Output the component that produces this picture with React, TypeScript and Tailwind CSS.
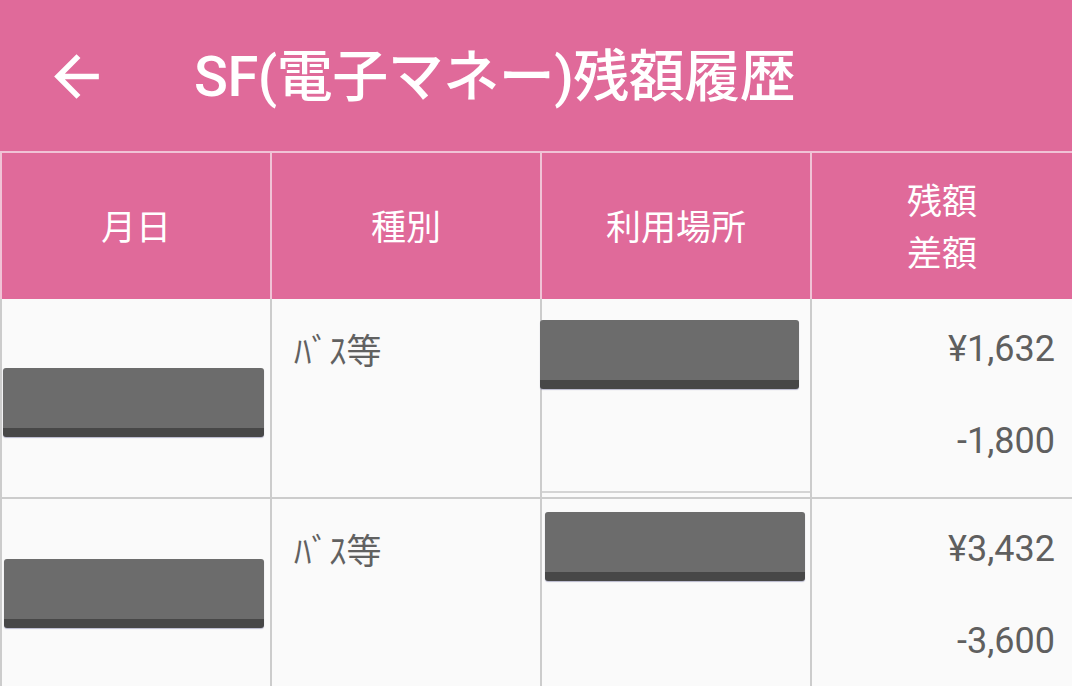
import React from 'react';

type Row = {
  kind: string;
  balance: string;
  diff: string;
  dateBlock: string;
  placeBlock: string;
};

const rows: Row[] = [
  { kind: 'ﾊﾞｽ等', balance: '¥1,632', diff: '-1,800', dateBlock: 'mt-[69px] ml-[1px] w-[261px]', placeBlock: 'mt-[21px] -ml-[2px] w-[259px]' },
  { kind: 'ﾊﾞｽ等', balance: '¥3,432', diff: '-3,600', dateBlock: 'mt-[60px] ml-[2px] w-[260px]', placeBlock: 'mt-[13px] ml-[3px] w-[260px]' },
];

const Redacted: React.FC<{ className: string }> = ({ className }) => (
  <div className={`h-[69px] rounded-[3px] bg-[#6c6c6c] border-b-[9px] border-[#474747] shadow-[0_1px_1px_rgba(60,60,120,0.35)] ${className}`} />
);

const App: React.FC = () => {
  return (
    <div
      className="w-[1072px] h-[686px] overflow-hidden bg-[#fafafa]"
      style={{ fontFamily: 'Roboto, "Noto Sans CJK JP", sans-serif' }}
    >
      {/* --- App bar --- */}
      <header className="h-[151px] bg-[#e06a9a] flex items-center pl-[43px] pt-[2px]">
        <svg width="67" height="67" viewBox="0 0 24 24" fill="white">
          <path d="M20 11H7.83l5.59-5.59L12 4l-8 8 8 8 1.41-1.41L7.83 13H20v-2z" />
        </svg>
        <h1 className="ml-[84px] text-[56px] leading-none font-medium text-white tracking-[-0.5px]">
          SF(電子マネー)残額履歴
        </h1>
      </header>

      {/* --- Table --- */}
      <div className="grid grid-cols-[270px_270px_270px_1fr]">
        {['月日', '種別', '利用場所'].map((h) => (
          <div
            key={h}
            className="h-[148px] bg-[#e06a9a] border-t-2 border-l-2 border-[#f0c3d6] flex items-center justify-center pt-[6px] text-[35px] text-white"
          >
            {h}
          </div>
        ))}
        <div className="h-[148px] bg-[#e06a9a] border-t-2 border-l-2 border-[#f0c3d6] flex flex-col items-center justify-center pt-[6px] text-[35px] leading-[52px] text-white">
          <span>残額</span>
          <span>差額</span>
        </div>

        {rows.map((r, i) => (
          <React.Fragment key={i}>
            <div className="h-[200px] border-l-2 border-b-2 border-[#cccccc]">
              <Redacted className={r.dateBlock} />
            </div>
            <div className="h-[200px] border-l-2 border-b-2 border-[#cccccc] pl-[22px] pt-[30px] text-[35px] leading-[48px] text-[#616161]">
              {r.kind}
            </div>
            <div className="h-[200px] border-l-2 border-b-2 border-[#cccccc] pb-[4px]">
              <div className="h-full border-b-2 border-[#d4d4d4] flex flex-col">
                <Redacted className={r.placeBlock} />
              </div>
            </div>
            <div className="h-[200px] border-l-2 border-b-2 border-[#cccccc] pr-[17px] pt-[27px] flex flex-col items-end text-[36px] leading-[46px] text-[#5f5f5f] gap-[46px]">
              <span>{r.balance}</span>
              <span>{r.diff}</span>
            </div>
          </React.Fragment>
        ))}
      </div>
    </div>
  );
};

export default App;
